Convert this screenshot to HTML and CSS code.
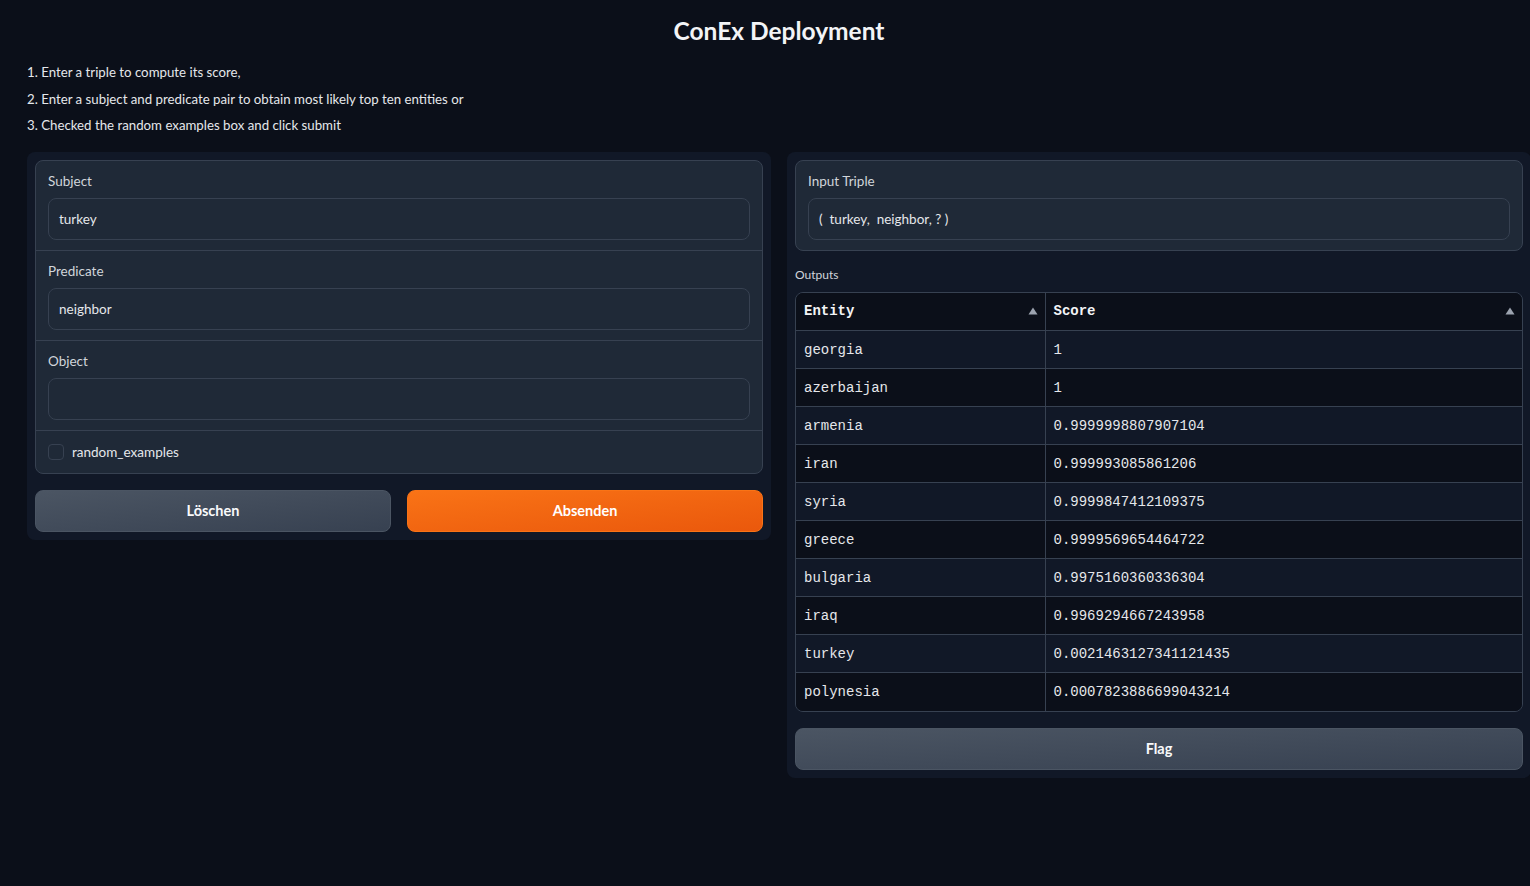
FILE: index.html
```html
<!DOCTYPE html>
<html>
<head>
<meta charset="utf-8">
<title>ConEx Deployment</title>
<link rel="stylesheet" href="styles.css">
</head>
<body>
<div class="app">
  <h1 class="title">ConEx Deployment</h1>
  <div class="intro">
    <p>1. Enter a triple to compute its score,</p>
    <p>2. Enter a subject and predicate pair to obtain most likely top ten entities or</p>
    <p>3. Checked the random examples box and click submit</p>
  </div>
  <div class="cols">
    <div class="panel">
      <div class="form">
        <div class="field">
          <div class="label">Subject</div>
          <div class="input">turkey</div>
        </div>
        <div class="field">
          <div class="label">Predicate</div>
          <div class="input">neighbor</div>
        </div>
        <div class="field">
          <div class="label">Object</div>
          <div class="input"></div>
        </div>
        <div class="field check">
          <span class="box"></span>
          <span class="check-label">random_examples</span>
        </div>
      </div>
      <div class="btn-row">
        <button class="btn secondary">Löschen</button>
        <button class="btn primary">Absenden</button>
      </div>
    </div>
    <div class="panel">
      <div class="form">
        <div class="field">
          <div class="label">Input Triple</div>
          <div class="input pre">(  turkey,  neighbor, ? )</div>
        </div>
      </div>
      <div class="out-label">Outputs</div>
      <div class="table-wrap">
        <table class="table">
          <thead>
            <tr>
              <th class="c1"><div class="th-in"><span>Entity</span><svg class="sort" width="10" height="8" viewBox="0 0 10 8"><path d="M5 0.5 L9.5 7.5 L0.5 7.5 Z" fill="#9ca3af"/></svg></div></th>
              <th><div class="th-in"><span>Score</span><svg class="sort" width="10" height="8" viewBox="0 0 10 8"><path d="M5 0.5 L9.5 7.5 L0.5 7.5 Z" fill="#9ca3af"/></svg></div></th>
            </tr>
          </thead>
          <tbody>
            <tr><td>georgia</td><td>1</td></tr>
            <tr><td>azerbaijan</td><td>1</td></tr>
            <tr><td>armenia</td><td>0.9999998807907104</td></tr>
            <tr><td>iran</td><td>0.999993085861206</td></tr>
            <tr><td>syria</td><td>0.9999847412109375</td></tr>
            <tr><td>greece</td><td>0.9999569654464722</td></tr>
            <tr><td>bulgaria</td><td>0.9975160360336304</td></tr>
            <tr><td>iraq</td><td>0.9969294667243958</td></tr>
            <tr><td>turkey</td><td>0.0021463127341121435</td></tr>
            <tr><td>polynesia</td><td>0.0007823886699043214</td></tr>
          </tbody>
        </table>
      </div>
      <button class="btn secondary flag">Flag</button>
    </div>
  </div>
</div>
</body>
</html>
```
FILE: styles.css
```css
* { box-sizing: border-box; }
html, body {
  margin: 0;
  padding: 0;
  background: #0b0f19;
  overflow: hidden;
}
body {
  font-family: Lato, "Noto Sans", sans-serif;
  color: #e5e7eb;
  font-size: 14px;
}
.app {
  padding-left: 27px;
  width: 1531px;
}
.title {
  margin: 0;
  padding-top: 16px;
  height: 58px;
  text-align: center;
  font-size: 24.5px;
  font-weight: 700;
  line-height: 30px;
  color: #f3f4f6;
}
.intro p {
  margin: 0;
  line-height: 26.5px;
  font-size: 13.25px;
  color: #e5e7eb;
}
.intro {
  margin-top: 1px;
  margin-bottom: 13px;
}
.cols {
  display: flex;
  gap: 16px;
  align-items: flex-start;
  width: 1504px;
}
.panel {
  flex: 1 1 0;
  background: #111827;
  border-radius: 8px;
  padding: 8px;
  display: flex;
  flex-direction: column;
  gap: 16px;
}
.form {
  background: #1f2937;
  border: 1px solid #374151;
  border-radius: 8px;
  overflow: hidden;
}
.field {
  padding: 10px 12px;
  border-top: 1px solid #374151;
}
.field:first-child { border-top: none; }
.label {
  line-height: 20px;
  font-size: 13.5px;
  color: #d1d5db;
  margin-bottom: 7px;
}
.input {
  height: 42px;
  border: 1px solid #374151;
  border-radius: 8px;
  padding: 0 10px;
  line-height: 40px;
  font-size: 13.5px;
  color: #e5e7eb;
  background: #1f2937;
}
.pre { white-space: pre; }
.check {
  display: flex;
  align-items: center;
  gap: 8px;
  height: 43px;
  padding-top: 0;
  padding-bottom: 0;
}
.box {
  width: 16px;
  height: 16px;
  border: 1px solid #374151;
  border-radius: 4px;
  background: #1f2937;
}
.check-label { color: #e5e7eb; font-size: 13.5px; }
.btn-row {
  display: flex;
  gap: 16px;
}
.btn {
  flex: 1 1 0;
  height: 42px;
  border-radius: 8px;
  font-family: Lato, "Noto Sans", sans-serif;
  font-size: 14.5px;
  font-weight: 700;
  color: #f9fafb;
  cursor: pointer;
}
.flag {
  flex: none;
  width: 100%;
}
.secondary {
  background: linear-gradient(to bottom right, #4b5563, #374151);
  border: 1px solid #4b5563;
}
.primary {
  background: linear-gradient(to bottom right, #f97316, #ea580c);
  border: 1px solid #f97316;
  color: #fff;
}
.out-label {
  font-size: 12px;
  line-height: 16px;
  color: #d1d5db;
  margin-bottom: -7px;
}
.table-wrap {
  border: 1px solid #374151;
  border-radius: 8px;
  overflow: hidden;
}
.table {
  width: 100%;
  border-collapse: collapse;
  font-family: "Liberation Mono", "DejaVu Sans Mono", monospace;
  font-size: 14px;
  color: #e5e7eb;
}
.table th, .table td {
  height: 38px;
  padding: 0 8px;
  text-align: left;
  border-top: 1px solid #374151;
  border-left: 1px solid #374151;
}
.table thead th { border-top: none; height: 38px; }
.table th:first-child, .table td:first-child { border-left: none; }
.table th.c1, .table td:first-child { width: 249px; }
.table th {
  background: #0b0f19;
  font-weight: 700;
  color: #f3f4f6;
}
.th-in {
  display: flex;
  align-items: center;
  justify-content: space-between;
}
.sort { flex: none; margin-right: -1px; }
.table tbody tr:nth-child(odd) td { background: #111827; }
.table tbody tr:nth-child(even) td { background: #0b0f19; }
```
